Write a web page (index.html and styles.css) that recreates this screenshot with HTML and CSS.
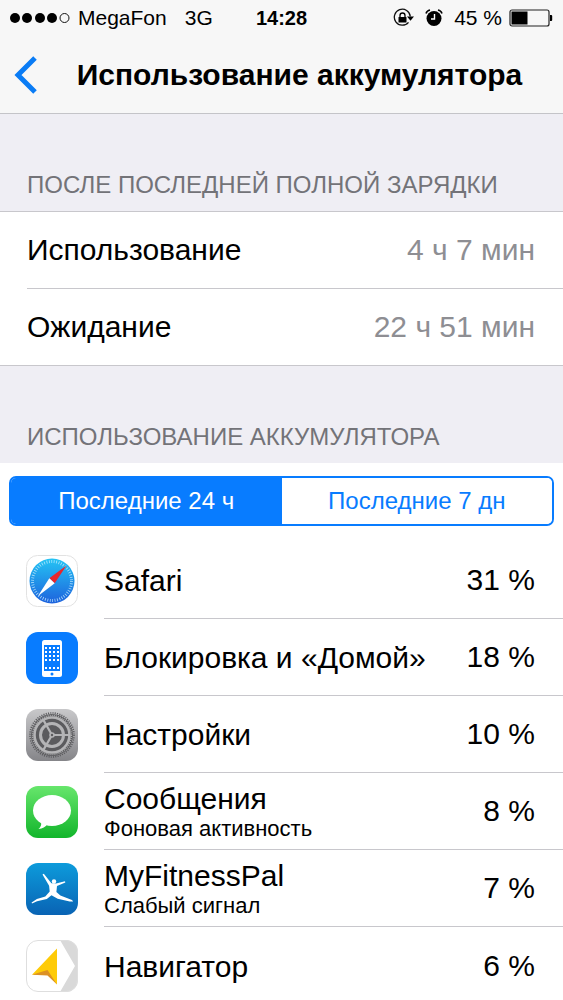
FILE: index.html
```html
<!DOCTYPE html>
<html lang="ru">
<head>
<meta charset="UTF-8">
<meta name="viewport" content="width=device-width, initial-scale=1.0">
<title>Использование аккумулятора</title>
<link rel="stylesheet" href="styles.css">
</head>
<body>
<header class="top">
  <div class="status">
    <div class="status-left">
      <svg class="signal" width="60" height="12" viewBox="0 0 60 12">
        <circle cx="5" cy="6" r="5"/>
        <circle cx="17" cy="6" r="5"/>
        <circle cx="30" cy="6" r="5"/>
        <circle cx="42" cy="6" r="5"/>
        <circle cx="54.500" cy="6" r="4.500" fill="none" stroke="#111" stroke-width="1"/>
      </svg>
      <span class="carrier">MegaFon</span>
      <span>3G</span>
    </div>
    <div class="clock">14:28</div>
    <div class="status-right">
      <svg width="22" height="20" viewBox="0 0 22 20">
        <path d="M15.500 14.300A8 8 0 1 1 17.300 8.500" fill="none" stroke="#111" stroke-width="1.300"/>
        <path d="M14 8.500h7l-3.500 4.200z"/>
        <rect x="5.500" y="9" width="8" height="5.500" rx=".6"/>
        <path d="M7 9.500V7.500a2.500 2.500 0 0 1 5 0v2" fill="none" stroke="#000" stroke-width="1.300"/>
      </svg>
      <svg class="alarm" width="18" height="20" viewBox="0 0 18 20">
        <circle cx="9" cy="10.500" r="7.500"/>
        <path d="M1 5.500Q1.800 2.800 5 2M17 5.500Q16.200 2.800 13 2" fill="none" stroke="#000" stroke-width="1.500"/>
        <path d="M9.500 6v5H6" fill="none" stroke="#fff" stroke-width="1.400"/>
      </svg>
      <span class="percent">45 %</span>
      <svg width="44" height="18" viewBox="0 0 44 18">
        <rect x="1" y="1" width="39" height="16" rx="2" fill="none" stroke="#222" stroke-width="1.200"/>
        <rect x="2.500" y="2.500" width="16" height="13"/>
        <path d="M41 6h1.200q1 0 1 1v4q0 1-1 1H41z"/>
      </svg>
    </div>
  </div>
  <nav class="navbar">
    <button class="back" type="button" aria-label="Назад">
      <svg width="24" height="38" viewBox="0 0 24 38"><path d="M21 2L4 19l17 17" fill="none" stroke="#0a7cf5" stroke-width="5"/></svg>
    </button>
    <h1>Использование аккумулятора</h1>
  </nav>
</header>

<main>
  <h2>После последней полной зарядки</h2>
  <dl class="times">
    <div class="time">
      <dt>Использование</dt>
      <dd>4 ч 7 мин</dd>
    </div>
    <div class="time">
      <dt>Ожидание</dt>
      <dd>22 ч 51 мин</dd>
    </div>
  </dl>

  <h2>Использование аккумулятора</h2>
  <section class="usage">
    <div class="tabs">
      <button class="tab active" type="button">Последние 24 ч</button>
      <button class="tab" type="button">Последние 7 дн</button>
    </div>

    <ul class="apps">
      <li class="app">
        <svg class="icon" viewBox="0 0 52 52">
          <defs>
            <linearGradient id="safari" x1="0" y1="0" x2="0" y2="1"><stop offset="0" stop-color="#25c4f4"/><stop offset="1" stop-color="#1d62dd"/></linearGradient>
          </defs>
          <rect x=".5" y=".5" width="51" height="51" rx="11" fill="#fff" stroke="#e2e2e2"/>
          <circle cx="26" cy="26" r="22.500" fill="url(#safari)"/>
          <circle cx="26" cy="26" r="19.500" fill="none" stroke="#c4ebff" stroke-width="3" stroke-dasharray=".8 1.650" opacity=".85"/>
          <path d="M40.500 10.500L28.700 28.200 23.300 23.200z" fill="#e8252b"/>
          <path d="M12 41L23.300 23.200l5.400 5z" fill="#fff"/>
        </svg>
        <div class="app-row">
          <div class="app-name">Safari</div>
          <div class="app-value">31 %</div>
        </div>
      </li>
      <li class="app">
        <svg class="icon" viewBox="0 0 52 52">
          <defs>
            <pattern id="dots" x="19" y="15" width="4" height="4" patternUnits="userSpaceOnUse"><rect width="2" height="2" fill="#fff"/></pattern>
          </defs>
          <rect width="52" height="52" rx="12" fill="#087cff"/>
          <rect x="16" y="8" width="20" height="37" rx="2.500" fill="#fff"/>
          <rect x="18" y="13" width="16" height="26" fill="#087cff"/>
          <rect x="19" y="15" width="14" height="14" fill="url(#dots)"/>
          <rect x="19" y="35" width="14" height="2" fill="url(#dots)"/>
          <circle cx="26" cy="42" r="1.500" fill="#087cff"/>
        </svg>
        <div class="app-row">
          <div class="app-name">Блокировка и «Домой»</div>
          <div class="app-value">18 %</div>
        </div>
      </li>
      <li class="app">
        <svg class="icon" viewBox="0 0 52 52">
          <defs>
            <linearGradient id="metal" x1="0" y1="0" x2="0" y2="1"><stop offset="0" stop-color="#c8c8ca"/><stop offset="1" stop-color="#858589"/></linearGradient>
          </defs>
          <rect width="52" height="52" rx="12" fill="url(#metal)"/>
          <circle cx="26" cy="26" r="21" fill="#5b5b5e"/>
          <circle cx="26" cy="26" r="22" fill="none" stroke="#5b5b5e" stroke-width="1.600" stroke-dasharray="1.100 1.200"/>
          <circle cx="26" cy="26" r="17.500" fill="none" stroke="#b4b4b6" stroke-width="2.600"/>
          <circle cx="26" cy="26" r="19.400" fill="none" stroke="#aeaeb0" stroke-width="1.500" stroke-dasharray="1 1.060"/>
          <circle cx="26" cy="26" r="11.500" fill="none" stroke="#b4b4b6" stroke-width="3"/>
          <path d="M26 26h18M26 26L17 10.400M26 26l-9 15.600" stroke="#b4b4b6" stroke-width="2.200"/>
          <circle cx="26" cy="26" r="2.800" fill="#b4b4b6"/>
          <circle cx="26" cy="26" r="1.200" fill="#5b5b5e"/>
        </svg>
        <div class="app-row">
          <div class="app-name">Настройки</div>
          <div class="app-value">10 %</div>
        </div>
      </li>
      <li class="app">
        <svg class="icon" viewBox="0 0 52 52">
          <defs>
            <linearGradient id="green" x1="0" y1="0" x2="0" y2="1"><stop offset="0" stop-color="#67e66c"/><stop offset="1" stop-color="#12b52b"/></linearGradient>
          </defs>
          <rect width="52" height="52" rx="12" fill="url(#green)"/>
          <ellipse cx="26" cy="24.500" rx="19" ry="15.500" fill="#fff"/>
          <path d="M15 35.500q1 4.500-2.500 7.500 6-.3 9-5z" fill="#fff"/>
        </svg>
        <div class="app-row">
          <div class="app-name">Сообщения <small>Фоновая активность</small></div>
          <div class="app-value">8 %</div>
        </div>
      </li>
      <li class="app">
        <svg class="icon" viewBox="0 0 52 52">
          <defs>
            <linearGradient id="blue" x1="0" y1="0" x2="0" y2="1"><stop offset="0" stop-color="#0d9bdb"/><stop offset="1" stop-color="#0963b4"/></linearGradient>
          </defs>
          <rect width="52" height="52" rx="12" fill="url(#blue)"/>
          <path d="M16.500 11.500l1.300-.7 7.600 9.400 4.600.4 9-2.400.3 1.200-8.300 3.600-.6 6 4 3.600 11.600 4.500 1.200 1.500-3.500-.2-12-2.600-6.200-3.600-4.700 3.800-9.800 2.200-5 2.400-.4-1 5.300-3.700 8.400-2.400 4.400-5-.6-5.700z" fill="#fff"/>
          <circle cx="28" cy="18.500" r="2.200" fill="#fff"/>
        </svg>
        <div class="app-row">
          <div class="app-name">MyFitnessPal <small>Слабый сигнал</small></div>
          <div class="app-value">7 %</div>
        </div>
      </li>
      <li class="app">
        <svg class="icon" viewBox="0 0 52 52">
          <defs>
            <clipPath id="round"><rect width="52" height="52" rx="12"/></clipPath>
          </defs>
          <g clip-path="url(#round)">
            <rect width="52" height="52" fill="#fff"/>
            <path d="M34 0h18v52H34l15-26z" fill="#d9d9d9"/>
          </g>
          <rect x=".5" y=".5" width="51" height="51" rx="11.500" fill="none" stroke="#dedede"/>
          <path d="M31 8.500v36l-9.500-10.700-15.500 1z" fill="#fecb08"/>
          <path d="M6 34.800l15.500-4.800L31 44.500l-9.500-9z" fill="#dc9124"/>
        </svg>
        <div class="app-row">
          <div class="app-name">Навигатор</div>
          <div class="app-value">6 %</div>
        </div>
      </li>
    </ul>
  </section>
</main>

<script>
  var tabs = document.querySelectorAll(".tab");
  tabs.forEach(function (tab) {
    tab.addEventListener("click", function () {
      tabs.forEach(function (t) {
        t.classList.remove("active");
      });
      tab.classList.add("active");
    });
  });
</script>
</body>
</html>
```
FILE: styles.css
```css
* {
  box-sizing: border-box;
}

body {
  margin: 0;
  font-family: "Liberation Sans", Arial, sans-serif;
  font-size: 30px;
  color: #000;
  background-color: #efeef4;
}

.top {
  background-color: #f7f7f7;
  border-bottom: 1px solid #c4c4c8;
}

.status {
  display: grid;
  grid-template-columns: 1fr auto 1fr;
  align-items: center;
  height: 36px;
  padding: 0 10px;
  font-size: 21px;
}

.status-left,
.status-right {
  display: flex;
  align-items: center;
}

.status-right {
  justify-content: flex-end;
}

.carrier {
  margin: 0 18px 0 8px;
}

.clock {
  font-size: 20px;
  font-weight: bold;
}

.alarm {
  margin: 0 11px 0 10px;
}

.percent {
  margin-right: 7px;
}

.navbar {
  display: flex;
  align-items: center;
  height: 77px;
  padding: 0 14px;
}

.back {
  display: flex;
  margin: 0;
  padding: 0;
  border: 0;
  background: none;
  cursor: pointer;
}

h1 {
  flex: 1;
  margin: 0 0 0 12px;
  text-align: center;
  font-size: 30px;
}

h2 {
  margin: 0;
  padding: 58px 27px 13px;
  font-size: 24px;
  line-height: 26px;
  font-weight: normal;
  color: #737378;
  text-transform: uppercase;
}

.times {
  margin: 0;
  padding-left: 27px;
  background-color: #fff;
  border-top: 1px solid #c8c7cc;
  border-bottom: 1px solid #c8c7cc;
}

.time {
  display: flex;
  align-items: center;
  justify-content: space-between;
  padding: 21px 28px 21px 0;
  line-height: 34px;
}

.time + .time {
  border-top: 1px solid #c8c7cc;
}

dd {
  margin: 0;
  color: #8e8e93;
}

.usage {
  padding-top: 13px;
  background-color: #fff;
}

.tabs {
  display: flex;
  height: 50px;
  margin: 0 9px 16px;
  border: 2px solid #087cff;
  border-radius: 7px;
  overflow: hidden;
}

.tab {
  flex: 1;
  border: 0;
  padding: 0;
  font-family: inherit;
  font-size: 24px;
  color: #087cff;
  background-color: #fff;
  cursor: pointer;
}

.tab.active {
  color: #fff;
  background-color: #087cff;
}

.apps {
  margin: 0;
  padding: 0 0 0 26px;
  list-style: none;
}

.app {
  display: flex;
  align-items: center;
  gap: 26px;
}

.icon {
  width: 52px;
  height: 52px;
}

.app-row {
  flex: 1;
  display: flex;
  align-items: center;
  justify-content: space-between;
  height: 77px;
  padding-right: 28px;
  border-bottom: 1px solid #c8c7cc;
}

.app:last-child .app-row {
  border-bottom: 0;
}

.app-name {
  padding-top: 2px;
  line-height: 34px;
}

.app-name small {
  display: block;
  font-size: 22px;
  line-height: 26px;
}
```
